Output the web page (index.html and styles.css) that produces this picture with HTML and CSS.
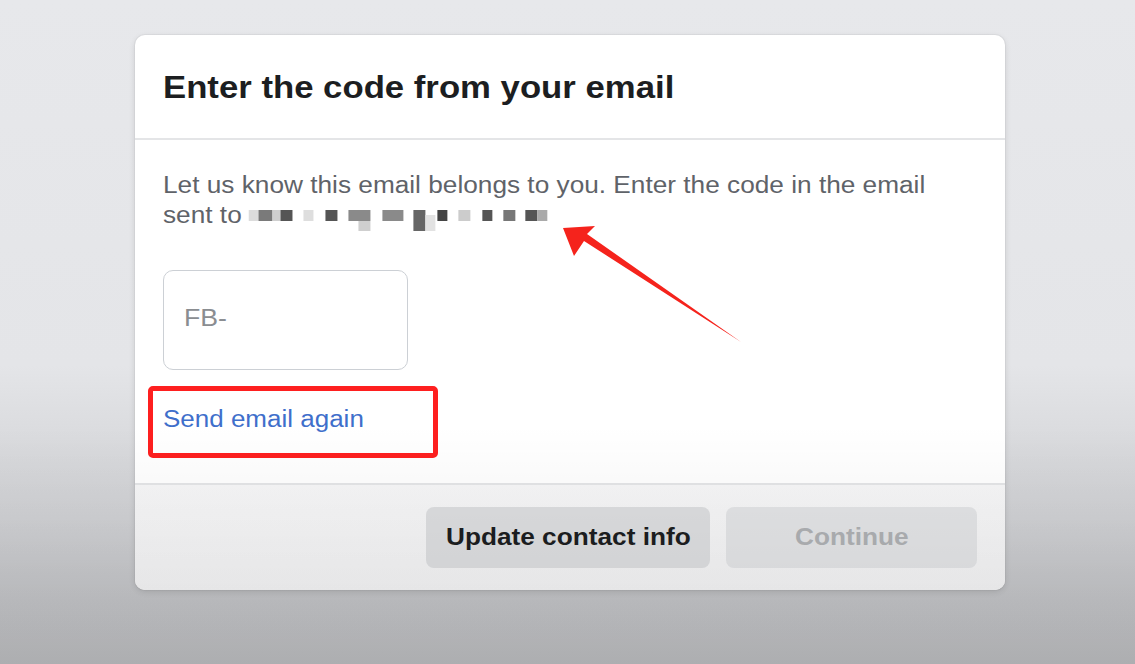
FILE: index.html
```html
<!DOCTYPE html>
<html lang="en">
<head>
<meta charset="utf-8">
<title>Enter the code from your email</title>
<link rel="stylesheet" href="styles.css">
</head>
<body>
<div class="page">
  <div class="card">
    <div class="card-header">
      <h1 class="title">Enter the code from your email</h1>
    </div>
    <div class="card-body">
      <p class="desc">Let us know this email belongs to you. Enter the code in the email sent to <svg class="masked" width="263" height="24" viewBox="0 0 300 24" preserveAspectRatio="none" aria-hidden="true">
        <rect x="0" y="2" width="10" height="11" fill="#dcdcdc"/>
        <rect x="10" y="2" width="14" height="11" fill="#7a7a7a"/>
        <rect x="24" y="2" width="8" height="11" fill="#cfcfcf"/>
        <rect x="32" y="2" width="12" height="11" fill="#555"/>
        <rect x="55" y="2" width="10" height="11" fill="#dedede"/>
        <rect x="77" y="2" width="12" height="11" fill="#555"/>
        <rect x="100" y="2" width="22" height="11" fill="#8a8a8a"/>
        <rect x="110" y="13" width="12" height="10" fill="#cfcfcf"/>
        <rect x="134" y="2" width="21" height="11" fill="#8a8a8a"/>
        <rect x="165" y="2" width="12" height="21" fill="#666"/>
        <rect x="177" y="7" width="10" height="16" fill="#e2e2e2"/>
        <rect x="189" y="2" width="10" height="11" fill="#444"/>
        <rect x="210" y="2" width="12" height="11" fill="#cccccc"/>
        <rect x="234" y="2" width="10" height="11" fill="#555"/>
        <rect x="255" y="2" width="12" height="11" fill="#777"/>
        <rect x="277" y="2" width="12" height="11" fill="#555"/>
        <rect x="289" y="2" width="10" height="11" fill="#aaa"/>
      </svg></p>
      <div class="code-input"><span class="placeholder">FB-</span></div>
      <div class="resend-wrap">
        <a class="resend" href="#">Send email again</a>
      </div>
    </div>
    <div class="card-footer">
      <button class="btn btn-secondary" type="button"><span class="btn-label">Update contact info</span></button>
      <button class="btn btn-disabled" type="button"><span class="btn-label">Continue</span></button>
    </div>
  </div>
  <svg class="arrow" width="200" height="130" viewBox="0 0 200 130" aria-hidden="true">
    <polygon points="3,6 35,4 27,12 181,120 24,19 14,34" fill="#f5231c"/>
  </svg>
</div>
</body>
</html>
```
FILE: styles.css
```css
html, body {
  margin: 0;
  padding: 0;
}
body {
  width: 1135px;
  height: 664px;
  overflow: hidden;
  font-family: "Liberation Sans", Arial, Helvetica, sans-serif;
  background: linear-gradient(to bottom, #e7e8eb 0%, #e4e5e8 55%, #cfd0d3 78%, #b6b7ba 100%);
}
.page {
  position: relative;
  height: 664px;
  padding-top: 35px;
  box-sizing: border-box;
}
.page::after {
  content: "";
  position: absolute;
  left: 0;
  top: 0;
  width: 100%;
  height: 100%;
  pointer-events: none;
  background: linear-gradient(to bottom, rgba(0,0,0,0) 0%, rgba(0,0,0,0) 64%, rgba(0,0,0,0.02) 72%, rgba(0,0,0,0.05) 90%);
}
.card {
  width: 870px;
  margin-left: 135px;
  background: #ffffff;
  border-radius: 10px;
  box-shadow: 0 2px 6px rgba(0,0,0,0.12), 0 0 0 1px rgba(0,0,0,0.03);
  overflow: hidden;
}
.card-header {
  height: 105px;
  box-sizing: border-box;
  border-bottom: 2px solid #e4e5e7;
  padding: 34px 28px 0;
}
.title {
  margin: 0;
  font-size: 31px;
  line-height: 38px;
  font-weight: bold;
  color: #1c1e21;
  transform: scaleX(1.12);
  transform-origin: left center;
  width: 680px;
}
.card-body {
  padding: 30px 28px 0;
  height: 345px;
  box-sizing: border-box;
  border-bottom: 2px solid #e4e5e7;
}
.desc {
  margin: 0;
  font-size: 23px;
  line-height: 30px;
  color: #5f6369;
  width: 690px;
  transform: scaleX(1.14);
  transform-origin: left center;
}
.masked {
  vertical-align: -9px;
}
.code-input {
  margin-top: 38px;
  width: 245px;
  height: 100px;
  box-sizing: border-box;
  border: 1.5px solid #ccd0d5;
  border-radius: 10px;
  display: flex;
  align-items: center;
  padding-left: 20px;
}
.placeholder {
  display: inline-block;
  font-size: 23px;
  color: #8a8d91;
  margin-top: -4px;
  transform: scaleX(1.16);
  transform-origin: left center;
}
.resend-wrap {
  margin-top: 16px;
  margin-left: -15px;
  width: 290px;
  height: 72px;
  box-sizing: border-box;
  border: 5px solid #fe1f1f;
  border-radius: 5px;
  padding: 15px 0 0 10px;
}
.resend {
  display: inline-block;
  font-size: 23px;
  color: #3f6fcb;
  text-decoration: none;
  transform: scaleX(1.13);
  transform-origin: left center;
}
.card-footer {
  height: 105px;
  box-sizing: border-box;
  display: flex;
  justify-content: flex-end;
  align-items: flex-start;
  gap: 16px;
  padding: 22px 28px 0;
  background: linear-gradient(to bottom, #f6f6f7, #f2f2f3);
}
.btn {
  height: 61px;
  border: none;
  border-radius: 8px;
  font-family: "Liberation Sans", Arial, Helvetica, sans-serif;
  font-size: 23px;
  font-weight: bold;
  padding: 0;
}
.btn-label {
  display: inline-block;
  transform: scaleX(1.14);
}
.btn-secondary {
  width: 284px;
  background: #dcdddf;
  color: #1c1e21;
}
.btn-disabled {
  width: 251px;
  background: #e2e3e5;
  color: #aeb0b3;
}
.arrow {
  position: absolute;
  left: 560px;
  top: 222px;
}
```
